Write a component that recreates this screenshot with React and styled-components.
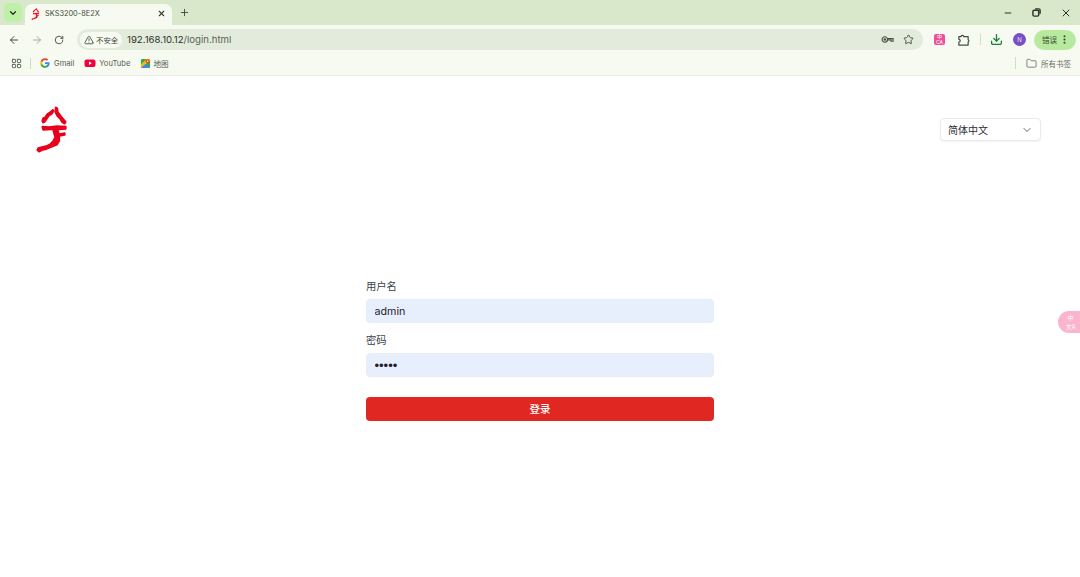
import React from "react";
import styled, { createGlobalStyle } from "styled-components";
import {
  ArrowLeft,
  ArrowRight,
  ChevronDown,
  Download,
  EllipsisVertical,
  Folder,
  LayoutGrid,
  Minus,
  Plus,
  RotateCw,
  Star,
  TriangleAlert,
  X,
} from "lucide-react";

const FONT = `"Noto Sans CJK SC", "Liberation Sans", sans-serif`;
const UI_FONT = `"Inter", "Noto Sans CJK SC", sans-serif`;

const GlobalStyle = createGlobalStyle`
  html, body {
    margin: 0;
    padding: 0;
    height: 100%;
    background: #fff;
    overflow: hidden;
    font-family: ${FONT};
  }
  * { box-sizing: border-box; }
`;

const Page = styled.div`
  width: 1080px;
  height: 577px;
  display: flex;
  flex-direction: column;
  position: relative;
  overflow: hidden;
`;

const TabStrip = styled.div`
  height: 25px;
  background: #d9e8ca;
  display: flex;
  align-items: flex-end;
  padding-left: 4px;
`;

const TabSearch = styled.div`
  width: 18px;
  height: 19px;
  margin-bottom: 3px;
  border-radius: 5px;
  background: #bff0a8;
  color: #26331e;
  display: flex;
  align-items: center;
  justify-content: center;
`;

const Tab = styled.div`
  width: 147px;
  height: 21px;
  margin-left: 3px;
  padding: 0 6px 2px 6px;
  background: #f6faf0;
  border-radius: 7px 7px 0 0;
  display: flex;
  align-items: center;
  color: #3a4238;
`;

const TabTitle = styled.span`
  flex: 1;
  margin-left: 5px;
  font-size: 7.4px;
  font-family: ${UI_FONT};
  color: #444b42;
`;

const NewTab = styled.div`
  margin: 0 0 4px 7px;
  height: 17px;
  display: flex;
  align-items: center;
  color: #3e4a38;
`;

const WindowControls = styled.div`
  margin-left: auto;
  height: 25px;
  display: flex;
  align-items: center;
  color: #2c3329;
`;

const WindowButton = styled.div`
  width: 29px;
  display: flex;
  justify-content: center;
`;

const Toolbar = styled.div`
  height: 26px;
  background: #f6faf0;
  display: flex;
  align-items: center;
  padding: 3px 0 0 3px;
`;

const NavButton = styled.div`
  width: 22.5px;
  display: flex;
  justify-content: center;
  color: ${(p) => (p.$muted ? "#a3aa9e" : "#454d42")};
`;

const Omnibox = styled.div`
  width: 846px;
  height: 21px;
  margin-left: 6.5px;
  padding: 0 3px;
  background: #e3ebdc;
  border-radius: 11px;
  display: flex;
  align-items: center;
`;

const SecurityChip = styled.div`
  height: 16px;
  width: 42px;
  padding-left: 4px;
  background: #f6faf0;
  border-radius: 8px;
  display: flex;
  align-items: center;
  gap: 2px;
  font-size: 7.4px;
  color: #3e453b;
`;

const Url = styled.span`
  margin-left: 5px;
  font-family: ${UI_FONT};
  font-size: 9.6px;
  color: #5a6156;
  b {
    font-weight: 400;
    color: #2a3027;
  }
`;

const OmniIcons = styled.div`
  margin-left: auto;
  display: flex;
  align-items: center;
  gap: 9px;
  padding-right: 6px;
  color: #454d42;
`;

const ToolIcons = styled.div`
  display: flex;
  align-items: center;
  margin-left: 11px;
  flex: 1;
`;

const TranslateBadge = styled.div`
  width: 11px;
  height: 11px;
  background: #ef4f98;
  border-radius: 2px;
  color: #fff;
  font-size: 5px;
  line-height: 5.5px;
  text-align: center;
  font-family: ${UI_FONT};
`;

const ToolSlot = styled.div`
  display: flex;
  align-items: center;
  justify-content: center;
  margin-left: ${(p) => p.$gap || 0}px;
  color: ${(p) => p.$color || "#454d42"};
`;

const Separator = styled.div`
  width: 1px;
  height: ${(p) => p.$h || 11}px;
  background: #c6e5b2;
  margin-left: ${(p) => p.$gap || 0}px;
`;

const Avatar = styled.div`
  width: 13px;
  height: 13px;
  border-radius: 50%;
  background: #7a4fc4;
  color: #e9defa;
  font-size: 6px;
  font-family: ${UI_FONT};
  display: flex;
  align-items: center;
  justify-content: center;
`;

const ErrorPill = styled.div`
  width: 42px;
  height: 20px;
  margin-left: 8px;
  padding-left: 8px;
  border-radius: 10px;
  background: #b7ea9e;
  color: #3a4a33;
  font-size: 7.6px;
  display: flex;
  align-items: center;
  gap: 2px;
`;

const BookmarkBar = styled.div`
  height: 25px;
  background: #f6faf0;
  border-bottom: 1px solid #e9ece6;
  display: flex;
  align-items: center;
  padding: 0 9px 0 11px;
  color: #4a5147;
`;

const Bookmark = styled.div`
  display: flex;
  align-items: center;
  gap: ${(p) => p.$inner || 4}px;
  margin-left: ${(p) => p.$gap}px;
  font-size: 7.6px;
  font-family: ${UI_FONT};
  color: #565d52;
`;

const AllBookmarks = styled.div`
  margin-left: auto;
  display: flex;
  align-items: center;
  gap: 4px;
  font-size: 7.5px;
  color: #6a7066;
`;

const Content = styled.main`
  flex: 1;
  display: flex;
  flex-direction: column;
  background: #fff;
`;

const Header = styled.header`
  display: flex;
  justify-content: space-between;
  padding: 30px 39px 0 35px;
  height: 203px;
`;

const LogoSvg = styled.svg`
  display: block;
  width: ${(p) => (p.$small ? 9 : 34)}px;
  height: ${(p) => (p.$small ? 12 : 47)}px;
`;

const LangSelect = styled.div`
  width: 101px;
  height: 23px;
  margin-top: 12px;
  padding: 0 7px;
  background: #fff;
  border: 1px solid #e8eaed;
  border-radius: 4px;
  box-shadow: 0 1px 2px rgba(0, 0, 0, 0.05);
  display: flex;
  align-items: center;
  justify-content: space-between;
  font-size: 10px;
  color: #2b3036;
`;

const Form = styled.form`
  width: 348px;
  margin: 0 auto;
  display: flex;
  flex-direction: column;
`;

const Field = styled.div`
  display: flex;
  flex-direction: column;
  gap: 5px;
  margin-top: ${(p) => p.$top || 0}px;
`;

const Label = styled.label`
  font-size: 10.3px;
  line-height: 13px;
  height: 15px;
  color: #3b4149;
`;

const Input = styled.input`
  width: 100%;
  height: 24px;
  padding: 0 7.5px;
  border: 1px solid #e6edf8;
  border-radius: 4px;
  background: #e7effc;
  outline: none;
  font-family: ${(p) => (p.type === "password" ? `"Liberation Sans"` : `"Inter"`)}, sans-serif;
  font-size: ${(p) => (p.type === "password" ? 13 : 10.7)}px;
  color: #1d2129;
`;

const Submit = styled.button`
  width: 100%;
  height: 24px;
  margin-top: 20px;
  padding: 0 0 2px;
  border: 0;
  border-radius: 4px;
  background: #e02722;
  color: #fff;
  font-family: ${FONT};
  font-size: 10.5px;
  font-weight: 500;
`;

const FloatTab = styled.div`
  position: absolute;
  right: 0;
  top: 311px;
  width: 22px;
  height: 22px;
  padding-left: 3px;
  border-radius: 11px 0 0 11px;
  background: #fbb4ce;
  color: #fff;
  font-size: 6px;
  line-height: 9px;
  font-family: ${FONT};
  display: flex;
  align-items: center;
  justify-content: center;
  text-align: center;
`;

const LogoMark = ({ small }) => (
  <LogoSvg viewBox="0 0 34 47" $small={small}>
    <g fill="#e8001c" stroke="#e8001c" strokeWidth="1.300" strokeLinejoin="bevel">
      <path d="M7 15 L8 12 L10 11 L12 8 L15 6 L18 3.500 L19 5 L17 8 L14 10 L12 13 L10 16 L8 17z" />
      <path d="M20.500 1 L22.500 2 L23 6 L26 10 L28.500 13 L31 16 L29.500 18 L27 16.500 L25 13 L22 10 L20 6z" />
      <path d="M7 20.500 L14 21 L22 20 L31 20.500 L31 23 L24 23.500 L16 23.500 L8 24z" />
      <path d="M18 24 L23 24 L24 28 L30 27 L30 29 L24.500 30 L24.500 35 L22 39 L17 41 L12 43 L8 44 L4 46 L2 44 L3 42 L7 41 L11 40 L15 38 L18 35 L20 31 L19 28z" />
    </g>
  </LogoSvg>
);

const GoogleMark = () => (
  <svg viewBox="0 0 24 24" width="10" height="10">
    <path fill="#4285f4" d="M23 12.3c0-.9-.1-1.600-.2-2.300H12v4.500h6.200c-.3 1.400-1.100 2.600-2.300 3.400v2.800h3.700C21.800 18.700 23 15.800 23 12.300z" />
    <path fill="#34a853" d="M12 23.500c3.100 0 5.700-1 7.600-2.800l-3.700-2.800c-1 .7-2.300 1.100-3.900 1.100-3 0-5.500-2-6.400-4.800H1.800v2.900c1.900 3.800 5.800 6.400 10.200 6.400z" />
    <path fill="#fbbc05" d="M5.600 14.200c-.5-1.400-.5-3 0-4.400V6.900H1.800c-1.600 3.200-1.600 7 0 10.200l3.800-2.900z" />
    <path fill="#ea4335" d="M12 4.900c1.700 0 3.200.6 4.400 1.700l3.300-3.300C17.700 1.500 15.100.5 12 .5 7.600.5 3.700 3.100 1.800 6.900l3.800 2.900C6.500 6.900 9 4.900 12 4.900z" />
  </svg>
);

const YoutubeMark = () => (
  <svg viewBox="0 0 24 24" width="12" height="12">
    <rect x="1" y="5" width="22" height="15" rx="4" fill="#f0003c" />
    <path d="M10 9l5.500 3.500L10 16z" fill="#fff" />
  </svg>
);

const MapsMark = () => (
  <svg viewBox="0 0 24 24" width="11" height="11">
    <rect x="2" y="2" width="20" height="20" rx="3" fill="#34a853" />
    <path d="M2 22 L22 6 V2 H14 L2 14z" fill="#fbbc05" />
    <path d="M2 22 L12 13 L22 22z" fill="#4285f4" />
    <circle cx="16.500" cy="7" r="4.500" fill="#ea4335" />
    <circle cx="16.500" cy="7" r="1.600" fill="#fff" />
  </svg>
);

const KeyIcon = () => (
  <svg viewBox="0 0 14 10" width="13" height="9" fill="none" stroke="currentColor" strokeWidth="1.200">
    <circle cx="4" cy="5" r="3" />
    <circle cx="4" cy="5" r=".8" fill="currentColor" />
    <path d="M7 4h6.200v3H11V5.600H7" />
  </svg>
);

const ExtensionIcon = () => (
  <svg viewBox="0 0 14 14" width="13" height="13" fill="none" stroke="currentColor" strokeWidth="1.300" strokeLinejoin="round">
    <path d="M2 4h2.300a1.500 1.500 0 0 1 3 0H12v3.200a1.500 1.500 0 0 1 0 2.600V13H2v-3.200a1.500 1.500 0 0 0 0-3z" />
  </svg>
);

const RestoreIcon = () => (
  <svg viewBox="0 0 10 10" width="9" height="9" fill="none" stroke="currentColor" strokeWidth="1.600">
    <rect x="1" y="2.500" width="6.500" height="6.500" rx="1.500" />
    <path d="M3.500 1h4A1.500 1.500 0 0 1 9 2.500v4" />
  </svg>
);

export default function App() {
  return (
    <>
      <GlobalStyle />
      <Page>
        <TabStrip>
          <TabSearch>
            <ChevronDown size={10} strokeWidth={3} />
          </TabSearch>
          <Tab>
            <LogoMark small />
            <TabTitle>SKS3200-8E2X</TabTitle>
            <X size={9} strokeWidth={3} />
          </Tab>
          <NewTab>
            <Plus size={11} strokeWidth={2} />
          </NewTab>
          <WindowControls>
            <WindowButton>
              <Minus size={10} strokeWidth={2.400} />
            </WindowButton>
            <WindowButton>
              <RestoreIcon />
            </WindowButton>
            <WindowButton>
              <X size={12} strokeWidth={2} />
            </WindowButton>
          </WindowControls>
        </TabStrip>

        <Toolbar>
          <NavButton>
            <ArrowLeft size={12} strokeWidth={2} />
          </NavButton>
          <NavButton $muted>
            <ArrowRight size={12} strokeWidth={2} />
          </NavButton>
          <NavButton>
            <RotateCw size={10} strokeWidth={2.200} />
          </NavButton>
          <Omnibox>
            <SecurityChip>
              <TriangleAlert size={10} strokeWidth={2} />
              不安全
            </SecurityChip>
            <Url>
              <b>192.168.10.12</b>/login.html
            </Url>
            <OmniIcons>
              <KeyIcon />
              <Star size={11} strokeWidth={2} />
            </OmniIcons>
          </Omnibox>
          <ToolIcons>
            <ToolSlot>
              <TranslateBadge>
                中
                <br />
                CA
              </TranslateBadge>
            </ToolSlot>
            <ToolSlot $gap={12}>
              <ExtensionIcon />
            </ToolSlot>
            <Separator $gap={10} />
            <ToolSlot $gap={9} $color="#1a7f37">
              <Download size={13} strokeWidth={2.400} />
            </ToolSlot>
            <ToolSlot $gap={10}>
              <Avatar>N</Avatar>
            </ToolSlot>
            <ErrorPill>
              错误
              <EllipsisVertical size={11} strokeWidth={2.500} />
            </ErrorPill>
          </ToolIcons>
        </Toolbar>

        <BookmarkBar>
          <LayoutGrid size={11} strokeWidth={1.800} />
          <Separator $gap={8} />
          <Bookmark $gap={9}>
            <GoogleMark />
            Gmail
          </Bookmark>
          <Bookmark $gap={10} $inner={3}>
            <YoutubeMark />
            YouTube
          </Bookmark>
          <Bookmark $gap={10} $inner={2}>
            <MapsMark />
            地图
          </Bookmark>
          <AllBookmarks>
            <Separator $h={12} />
            <ToolSlot $gap={6} $color="#4a5147">
              <Folder size={11} strokeWidth={1.500} />
            </ToolSlot>
            所有书签
          </AllBookmarks>
        </BookmarkBar>

        <Content>
          <Header>
            <LogoMark />
            <LangSelect>
              简体中文
              <ChevronDown size={12} strokeWidth={1.800} color="#555" />
            </LangSelect>
          </Header>
          <Form onSubmit={(e) => e.preventDefault()}>
            <Field>
              <Label>用户名</Label>
              <Input type="text" value="admin" readOnly />
            </Field>
            <Field $top={10}>
              <Label>密码</Label>
              <Input type="password" value="admin" readOnly />
            </Field>
            <Submit type="submit">登录</Submit>
          </Form>
        </Content>

        <FloatTab>
          中
          <br />
          文A
        </FloatTab>
      </Page>
    </>
  );
}
